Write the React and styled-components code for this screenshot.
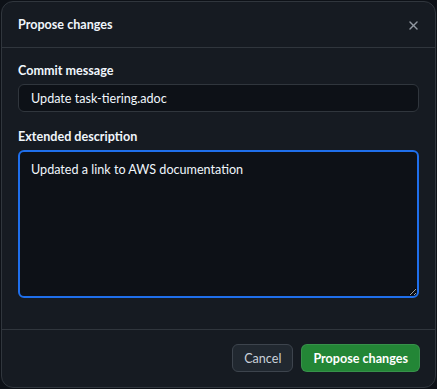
import styled, { createGlobalStyle } from "styled-components";

const GlobalStyle = createGlobalStyle`
  html, body {
    margin: 0;
    padding: 0;
    background: #0d1117;
  }
  body {
    font-family: "Segoe UI", Lato, sans-serif;
    font-size: 12.6px;
    color: #f0f6fc;
  }
`;

const CloseIcon = () => (
  <svg width="15" height="15" viewBox="0 0 16 16" fill="currentColor">
    <path d="M3.72 3.72a.75.75 0 0 1 1.06 0L8 6.94l3.22-3.22a.749.749 0 0 1 1.275.326.749.749 0 0 1-.215.734L9.06 8l3.22 3.22a.749.749 0 0 1-.326 1.275.749.749 0 0 1-.734-.215L8 9.06l-3.22 3.22a.751.751 0 0 1-1.042-.018.751.751 0 0 1-.018-1.042L6.94 8 3.72 4.78a.75.75 0 0 1 0-1.06Z" />
  </svg>
);

const App = () => {
  return (
    <>
      <GlobalStyle />
      <Page>
        <Dialog>
          <Header>
            <Title>Propose changes</Title>
            <CloseButton aria-label="Close">
              <CloseIcon />
            </CloseButton>
          </Header>
          <Body>
            <Field>
              <Label>Commit message</Label>
              <Input defaultValue="Update task-tiering.adoc" />
            </Field>
            <Field>
              <Label>Extended description</Label>
              <TextArea defaultValue="Updated a link to AWS documentation" />
            </Field>
          </Body>
          <Footer>
            <Button>Cancel</Button>
            <Button $primary>Propose changes</Button>
          </Footer>
        </Dialog>
      </Page>
    </>
  );
};

export default App;

// Styled Components

const Page = styled.div`
  width: 437px;
  height: 389px;
  padding: 1px;
  box-sizing: border-box;
  display: flex;
`;

const Dialog = styled.div`
  flex: 1;
  display: flex;
  flex-direction: column;
  background: #161b22;
  border: 1px solid #30363d;
  border-radius: 12px;
  overflow: hidden;
`;

const Header = styled.div`
  height: 45px;
  padding: 0 16px 0 16px;
  display: flex;
  align-items: center;
  justify-content: space-between;
  border-bottom: 1px solid #30363d;
`;

const Title = styled.h1`
  margin: 0;
  font-size: 12.6px;
  font-weight: 700;
  line-height: 20px;
  padding-top: 1px;
`;

const CloseButton = styled.button`
  width: 24px;
  height: 24px;
  margin-right: -6px;
  margin-top: 2px;
  padding: 0;
  border: none;
  background: transparent;
  color: #9198a1;
  display: flex;
  align-items: center;
  justify-content: center;
`;

const Body = styled.div`
  flex: 1;
  padding: 13px 16px 30px;
  display: flex;
  flex-direction: column;
  gap: 15px;
`;

const Field = styled.div`
  display: flex;
  flex-direction: column;
  gap: 3px;
`;

const Label = styled.label`
  font-size: 12.6px;
  font-weight: 700;
  line-height: 20px;
`;

const Input = styled.input`
  box-sizing: border-box;
  height: 28px;
  padding: 0 12px;
  font: inherit;
  font-size: 12.6px;
  color: #f0f6fc;
  background: #0d1117;
  border: 1px solid #30363d;
  border-radius: 6px;
  outline: none;
`;

const TextArea = styled.textarea`
  box-sizing: border-box;
  height: 148px;
  padding: 9px 11px;
  font: inherit;
  font-size: 12.6px;
  line-height: 18px;
  color: #f0f6fc;
  background: #0d1117;
  border: 2px solid #1f6feb;
  border-radius: 6px;
  outline: none;
  resize: vertical;
`;

const Footer = styled.div`
  padding: 14px 15px 15px;
  display: flex;
  justify-content: flex-end;
  gap: 8px;
  border-top: 1px solid #30363d;
`;

const Button = styled.button`
  height: 28px;
  padding: 0 11px;
  font: inherit;
  font-size: 12.6px;
  font-weight: ${(p) => (p.$primary ? 700 : 400)};
  color: ${(p) => (p.$primary ? "#ffffff" : "#c9d1d9")};
  background: ${(p) => (p.$primary ? "#238636" : "#212830")};
  border: 1px solid ${(p) => (p.$primary ? "rgba(240,246,252,0.1)" : "#3d444d")};
  border-radius: 6px;
`;
